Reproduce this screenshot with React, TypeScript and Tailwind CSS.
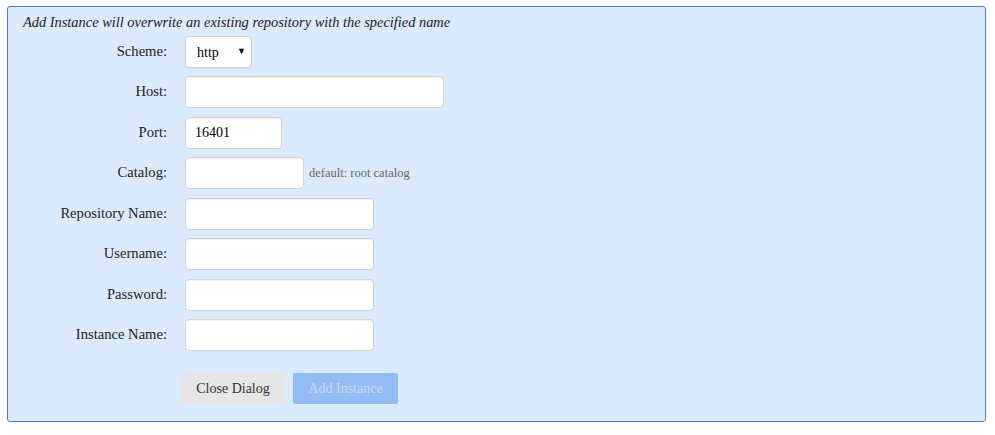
import React from "react";

const serif = { fontFamily: '"Liberation Serif", "Times New Roman", serif' };

type Field = { label: string; width: string; value?: string; note?: string };

const fields: Field[] = [
  { label: "Host:", width: "w-[259px]" },
  { label: "Port:", width: "w-[97px]", value: "16401" },
  { label: "Catalog:", width: "w-[119px]", note: "default: root catalog" },
  { label: "Repository Name:", width: "w-[189px]" },
  { label: "Username:", width: "w-[189px]" },
  { label: "Password:", width: "w-[189px]" },
  { label: "Instance Name:", width: "w-[189px]" },
];

function Row({ label, children }: { label: string; children: React.ReactNode }) {
  return (
    <div className="flex h-[40.45px] items-start">
      <div className="w-[159px] h-[32px] flex items-center justify-end text-[14.6px] text-[#222]">
        {label}
      </div>
      <div className="ml-[18px] flex items-center">{children}</div>
    </div>
  );
}

export default function App() {
  return (
    <div className="min-h-screen bg-white pt-[6px] pl-[7px] pr-[9px]" style={serif}>
      <div className="h-[416px] rounded-[3px] border border-[#4a80c6] bg-[#dceafd]">
        <p className="pl-[15px] pt-[7px] text-[14.4px] italic text-[#222] leading-[17px]">
          Add Instance will overwrite an existing repository with the specified name
        </p>
        <div className="mt-[5px]">
          <Row label="Scheme:">
            <div className="relative flex h-[32px] w-[67px] items-center rounded-[4px] border border-[#d3d3d3] bg-white pl-[11px] text-[14px] text-black shadow-[0_1px_1px_rgba(0,0,0,0.05)]">
              http
              <span className="absolute right-[5px] top-[10px] text-[9px] leading-none">▼</span>
            </div>
          </Row>
          {fields.map((f) => (
            <Row key={f.label} label={f.label}>
              <div
                className={`h-[32px] ${f.width} rounded-[4px] border border-[#d3d3d3] bg-white pl-[9px] flex items-center text-[14px] text-black shadow-[inset_0_1px_1px_rgba(0,0,0,0.06)]`}
              >
                {f.value}
              </div>
              {f.note && <span className="ml-[5px] text-[12.5px] text-[#666]">{f.note}</span>}
            </Row>
          ))}
        </div>
        <div className="mt-[13px] ml-[173px] flex gap-[8px]">
          <button className="h-[31px] w-[104px] rounded-[2px] bg-[#e6e6e6] text-[14px] text-[#333]">
            Close Dialog
          </button>
          <button className="h-[31px] w-[105px] rounded-[2px] bg-[#93bcf4] text-[14px] text-[#c8dcfa]">
            Add Instance
          </button>
        </div>
      </div>
    </div>
  );
}
